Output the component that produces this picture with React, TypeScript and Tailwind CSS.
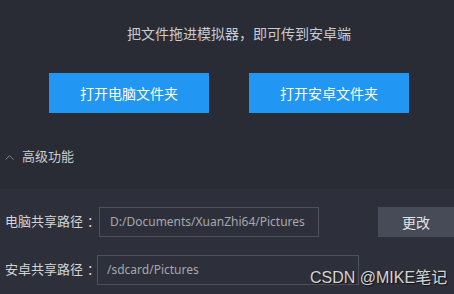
import { ChevronUp } from 'lucide-react';

const font = { fontFamily: '"Microsoft YaHei", "Noto Sans", "Noto Sans CJK SC", sans-serif' };

function PathRow({ label, value, inputClass }: { label: string; value: string; inputClass: string }) {
  return (
    <div className="flex items-center h-[30px]">
      <div className="w-[97px] shrink-0 pl-[5px] whitespace-nowrap text-[13px] text-[#d2d4d8]">
        {label}
        <span className="ml-[4px]">：</span>
      </div>
      <div className={`h-[30px] flex items-center border border-[#4e515c] text-[12px] text-[#a6a8ad] ${inputClass}`}>
        {value}
      </div>
    </div>
  );
}

export default function App() {
  return (
    <div className="relative w-[454px] h-[294px] overflow-hidden bg-[#292c35]" style={font}>
      <div className="pt-[24px] h-[73px] pl-[24px] text-center text-[14px] leading-[20px] text-[#c9cbcf]">
        把文件拖进模拟器，即可传到安卓端
      </div>

      <div className="flex gap-[40px] pl-[49px]">
        <button className="w-[160px] h-[40px] bg-[#2196f3] text-white text-[14px]">打开电脑文件夹</button>
        <button className="w-[160px] h-[40px] bg-[#2196f3] text-white text-[14px]">打开安卓文件夹</button>
      </div>

      <div className="flex items-center h-[76px] pt-[12px] pl-[2px] gap-[5px] text-[13px] text-[#c9cbcf]">
        <ChevronUp size={15} strokeWidth={1.25} className="text-[#9a9ca2]" />
        <span>高级功能</span>
      </div>

      <div className="bg-[#2d303a] h-[105px] pt-[18px] flex flex-col gap-[18px]">
        <div className="flex items-center">
          <PathRow label="电脑共享路径" value="D:/Documents/XuanZhi64/Pictures" inputClass="ml-[2px] w-[220px] pl-[10px]" />
          <button className="ml-[59px] w-[76px] h-[30px] bg-[#474b57] text-[14px] text-[#e2e3e6]">更改</button>
        </div>
        <PathRow label="安卓共享路径" value="/sdcard/Pictures" inputClass="w-[262px] pl-[9px]" />
      </div>

      <div
        className="absolute left-[310px] top-[266px] text-[16px] text-[#d4d4d4]"
        style={{ fontFamily: '"Liberation Sans", "Noto Sans CJK SC", sans-serif', textShadow: '1px 1px 1px #111' }}
      >
        CSDN @MIKE笔记
      </div>
    </div>
  );
}
